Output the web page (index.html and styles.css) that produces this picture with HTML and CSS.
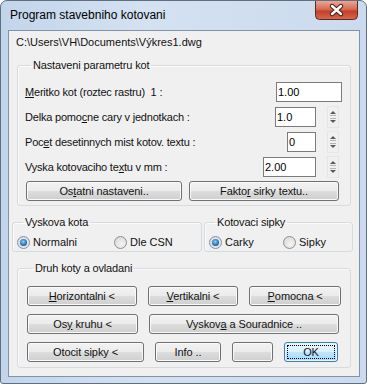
FILE: index.html
```html
<!DOCTYPE html>
<html lang="cs">
<head>
  <meta charset="UTF-8">
  <title>Program stavebniho kotovani</title>
  <link rel="stylesheet" href="styles.css">
</head>
<body>
  <div class="window">
    <div class="titlebar">
      <span class="title">Program stavebniho kotovani</span>
      <div class="close">
        <svg width="43" height="19" viewBox="0 0 43 19">
          <defs>
            <linearGradient id="red" x1="0" y1="0" x2="0" y2="1">
              <stop offset="0" stop-color="#e9a797"/>
              <stop offset="0.45" stop-color="#d66a52"/>
              <stop offset="0.55" stop-color="#c1402a"/>
              <stop offset="1" stop-color="#d8684c"/>
            </linearGradient>
          </defs>
          <path d="M0.5 0 V14.5 Q0.5 18.5 4.5 18.5 H38.5 Q42.5 18.5 42.5 14.5 V0" fill="url(#red)" stroke="#5b2a22"/>
          <path d="M17 5 L26 13 M26 5 L17 13" stroke="#4a1d16" stroke-width="4.4" stroke-linecap="round"/>
          <path d="M17 5 L26 13 M26 5 L17 13" stroke="#ffffff" stroke-width="2.4" stroke-linecap="round"/>
        </svg>
      </div>
    </div>

    <div class="client">
      <div class="path">C:\Users\VH\Documents\Výkres1.dwg</div>

      <!-- parametry kot -->
      <fieldset class="group params">
        <legend>Nastaveni parametru kot</legend>
        <div class="row">
          <label><u>M</u>eritko kot (roztec rastru)&nbsp; 1 :</label>
          <input class="w66" type="text" value="1.00">
        </div>
        <div class="row">
          <label>Delka pomo<u>c</u>ne cary v jednotkach :</label>
          <input class="w41" type="text" value="1.0">
          <div class="spin-slot">
            <svg class="spin" width="12" height="22" viewBox="0 0 12 22">
              <rect x="0.5" y="0.5" width="11" height="21" fill="none" stroke="#e6e6e6"/>
              <path d="M3 8 L6 5 L9 8 Z" fill="#5a5a5a"/>
              <path d="M3 9.5 H9" stroke="#b4b4b4"/>
              <path d="M3 12.5 H9" stroke="#b4b4b4"/>
              <path d="M3 14 L6 17 L9 14 Z" fill="#5a5a5a"/>
            </svg>
          </div>
        </div>
        <div class="row">
          <label>Poc<u>e</u>t desetinnych mist kotov. textu :</label>
          <input class="w29" type="text" value="0">
          <div class="spin-slot">
            <svg class="spin" width="12" height="22" viewBox="0 0 12 22">
              <rect x="0.5" y="0.5" width="11" height="21" fill="none" stroke="#e6e6e6"/>
              <path d="M3 8 L6 5 L9 8 Z" fill="#5a5a5a"/>
              <path d="M3 9.5 H9" stroke="#b4b4b4"/>
              <path d="M3 12.5 H9" stroke="#b4b4b4"/>
              <path d="M3 14 L6 17 L9 14 Z" fill="#5a5a5a"/>
            </svg>
          </div>
        </div>
        <div class="row">
          <label>Vyska kotovaciho te<u>x</u>tu v mm :</label>
          <input class="w53" type="text" value="2.00">
          <div class="spin-slot">
            <svg class="spin" width="12" height="22" viewBox="0 0 12 22">
              <rect x="0.5" y="0.5" width="11" height="21" fill="none" stroke="#e6e6e6"/>
              <path d="M3 8 L6 5 L9 8 Z" fill="#5a5a5a"/>
              <path d="M3 9.5 H9" stroke="#b4b4b4"/>
              <path d="M3 12.5 H9" stroke="#b4b4b4"/>
              <path d="M3 14 L6 17 L9 14 Z" fill="#5a5a5a"/>
            </svg>
          </div>
        </div>
        <div class="btnrow first">
          <button class="w156">Os<u>t</u>atni nastaveni..</button>
          <button class="w150">Fakto<u>r</u> sirky textu..</button>
        </div>
      </fieldset>

      <!-- prepinace -->
      <div class="pair">
        <fieldset class="group radios left">
          <legend>Vyskova kota</legend>
          <div class="opts">
            <label class="opt w97"><span class="radio checked"></span>Normalni</label>
            <label class="opt"><span class="radio"></span>Dle CSN</label>
          </div>
        </fieldset>
        <fieldset class="group radios right">
          <legend>Kotovaci sipky</legend>
          <div class="opts">
            <label class="opt w74"><span class="radio checked"></span>Carky</label>
            <label class="opt"><span class="radio"></span>Sipky</label>
          </div>
        </fieldset>
      </div>

      <!-- ovladani -->
      <fieldset class="group actions">
        <legend>Druh koty a ovladani</legend>
        <div class="btnrow">
          <button class="w110"><u>H</u>orizontalni &lt;</button>
          <button class="w91"><u>V</u>ertikalni &lt;</button>
          <button class="w92"><u>P</u>omocna &lt;</button>
        </div>
        <div class="btnrow">
          <button class="w111">Os<u>y</u> kruhu &lt;</button>
          <button class="w190">Vyskov<u>a</u> a Souradnice ..</button>
        </div>
        <div class="btnrow">
          <button class="w117">Otocit sipky &lt;</button>
          <button class="w66">Info ..</button>
          <button class="w41"></button>
          <button class="w54 ok">OK</button>
        </div>
      </fieldset>
    </div>
  </div>
</body>
</html>
```

FILE: styles.css
```css
* {
  box-sizing: border-box;
}
body {
  margin: 0;
  font-family: "Liberation Sans", Arial, sans-serif;
  font-size: 11px;
  color: #111;
  background: #fff;
}
.window {
  width: 367px;
  height: 384px;
  border: 1px solid #5e6f84;
  border-radius: 7px 7px 3px 3px;
  background: linear-gradient(90deg, #c3d5eb, #d4e1f1 40%, #cbdaee);
  padding: 0 6px 6px 7px;
  display: flex;
  flex-direction: column;
}
.titlebar {
  height: 29px;
  display: flex;
  justify-content: space-between;
  align-items: flex-start;
}
.title {
  font-size: 12px;
  line-height: 14px;
  padding: 7px 0 0 2px;
  color: #000;
}
.close {
  height: 19px;
  margin-right: 2px;
}
.close svg {
  display: block;
}
.client {
  flex: 1;
  border: 1px solid #8293a9;
  background: #f0f0f0;
}
.path {
  line-height: 13px;
  padding: 5px 0 0 7px;
}

/* group box */
.group {
  margin: 0;
  padding: 0;
  min-width: 0;
  border: 1px solid #d5dbe0;
  border-radius: 3px;
  box-shadow: inset 1px 1px 0 #fbfbfb;
}
.group legend {
  padding: 0 2px;
  margin-left: 6px;
  line-height: 13px;
  letter-spacing: -0.15px;
}
.params {
  margin: 10px 8px 0 8px;
  padding: 10px 8px 4px 7px;
}
.row {
  display: flex;
  align-items: center;
  height: 20px;
  margin-bottom: 5px;
}
.row label {
  flex: 1;
  letter-spacing: -0.2px;
}
.row input {
  height: 20px;
  border: 1px solid #7b7b7b;
  padding: 0 0 0 1px;
  margin: 0;
  font-family: inherit;
  font-size: 11px;
  color: #000;
  background: #fff;
  outline: none;
}
.spin-slot {
  width: 26px;
  height: 20px;
  display: flex;
  align-items: center;
  padding-left: 11px;
}
.spin {
  display: block;
}
.w29 { width: 29px; }
.w41 { width: 41px; }
.w53 { width: 53px; }
.w54 { width: 54px; }
.w66 { width: 66px; }
.w74 { width: 74px; }
.w91 { width: 91px; }
.w92 { width: 92px; }
.w97 { width: 97px; }
.w110 { width: 110px; }
.w111 { width: 111px; }
.w117 { width: 117px; }
.w150 { width: 150px; }
.w156 { width: 156px; }
.w190 { width: 190px; }

/* buttons */
.btnrow {
  display: flex;
  gap: 11px;
  margin-bottom: 8px;
}
.btnrow:last-child {
  margin-bottom: 0;
}
.btnrow.first {
  gap: 7px;
  margin-left: 1px;
  margin-top: -1px;
}
button {
  position: relative;
  height: 20px;
  margin: 0;
  padding: 0;
  font-family: inherit;
  font-size: 11px;
  letter-spacing: -0.1px;
  color: #111;
  border: 1px solid #707070;
  border-radius: 3px;
  background: linear-gradient(#f2f2f2, #ebebeb 50%, #dddddd 50%, #cfcfcf);
  box-shadow: inset 0 0 0 1px #fafafa;
}
button.ok {
  border-color: #3c7fb1;
  background: linear-gradient(#eaf6fd, #d9f0fc 50%, #bee6fd 50%, #a7d9f5);
  box-shadow: inset 0 0 0 1px #e6f4fc;
}
button.ok::after {
  content: "";
  position: absolute;
  inset: 2px;
  border: 1px dotted #000;
}

/* radio groups */
.pair {
  display: flex;
  gap: 2px;
  margin: 10px 5px 0 3px;
}
.radios.left {
  width: 190px;
}
.radios.right {
  width: 149px;
}
.radios {
  padding: 5px 4px 1px 4px;
}
.opts {
  display: flex;
  height: 16px;
  align-items: center;
}
.opt {
  display: flex;
  align-items: center;
  gap: 3px;
}
.radio {
  width: 13px;
  height: 13px;
  border-radius: 50%;
  border: 1px solid #8e8f8f;
  background: radial-gradient(circle at 60% 65%, #f4f4f4, #d4d4d4);
  display: flex;
  align-items: center;
  justify-content: center;
}
.radio.checked::after {
  content: "";
  width: 7px;
  height: 7px;
  border-radius: 50%;
  background: radial-gradient(circle at 45% 40%, #8fd5f7, #1a6fc0 60%, #0b3f7e);
  box-shadow: 0 0 0 1px #d8e4ee;
}
.actions {
  margin: 10px 8px 0 8px;
  padding: 11px 9px 5px 9px;
}
```
